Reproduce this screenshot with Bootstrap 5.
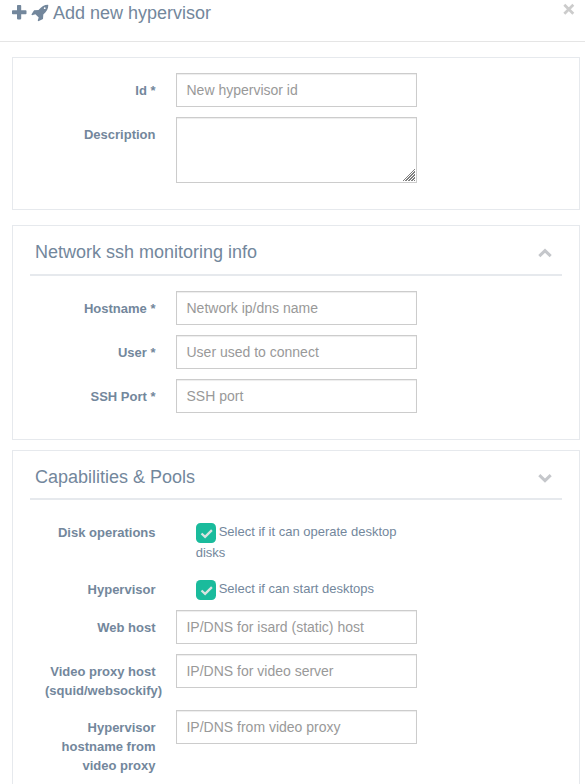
<!DOCTYPE html>
<html lang="en">
<head>
<meta charset="utf-8">
<meta name="viewport" content="width=device-width, initial-scale=1">
<title>Add new hypervisor</title>
<link href="https://cdn.jsdelivr.net/npm/bootstrap@5.3.0/dist/css/bootstrap.min.css" rel="stylesheet">
<style>
body { font-family: "Liberation Sans", Arial, sans-serif; font-size: 13px; line-height: 19px; color: #73879c; height: 784px; overflow: hidden; }
.dialog-head { height: 42px; border-bottom: 1px solid #e5e5e5; padding: 0 10px 0 11px; }
.dialog-title, .panel-title { font-size: 18px; font-weight: 400; line-height: 20px; }
.dialog-title { padding-top: 3px; }
.panel-box { width: 568px; margin-left: 12px; border: 1px solid #e6e9ed; padding: 15px 17px 0; }
.panel-first { margin-top: 15px; height: 153px; }
.panel-net { margin-top: 15px; height: 215px; padding-top: 10px; }
.panel-cap { margin-top: 10px; height: 334px; padding-top: 10px; border-bottom: 0; }
.panel-head { height: 40px; border-bottom: 2px solid #e6e9ed; padding: 6px 10px 0 5px; margin-bottom: 15px; }
.panel-cap .panel-head { height: 39px; }
.field-row { margin-bottom: 10px; }
.field-label { width: 110.5px; margin: 0 20.2px 0 15px; padding-top: 8px; text-align: right; font-weight: 700; }
.form-control.field { width: 241px; height: 34px; padding: 6px 9.8px; font-size: 14px; line-height: 20px; border: 1px solid #ccc; border-radius: 0; box-shadow: inset 0 1px 1px rgba(0,0,0,.075); color: #555; }
.form-control.field::placeholder { color: #999; }
.form-control.field-area { height: 66px; resize: vertical; }
.field-area::-webkit-resizer { background: linear-gradient(135deg, #fff 54%, transparent 54%), repeating-linear-gradient(135deg, #808080 0 1px, #fff 1px 2.120px); border: solid #fff; border-width: 0 1px 1px 0; }
.option { width: 221px; margin-left: 20px; padding-top: 7px; }
.option-two { height: 47px; }
.option-one { height: 28px; }
.tick { width: 20px; height: 20px; margin-right: 3px; vertical-align: middle; }
</style>
<script src="https://cdn.jsdelivr.net/npm/bootstrap@5.3.0/dist/js/bootstrap.bundle.min.js"></script>
</head>
<body class="bg-white">
<header class="dialog-head d-flex justify-content-between align-items-start">
  <h4 class="dialog-title d-flex m-0">
    <svg width="42" height="22" viewBox="0 0 42 22" fill="#73879c" aria-hidden="true">
      <path d="M6.800 2h2.600q.8 0 .8.8v4.500h4.500q.8 0 .8.8v2.300q0 .8-.8.8h-4.500v4.400q0 .8-.8.8h-2.600q-.8 0-.8-.8v-4.400h-4.200q-.8 0-.8-.8v-2.300q0-.8.8-.8h4.200v-4.500q0-.8.8-.8z"/>
      <path fill-rule="evenodd" d="M37 1.700q.3 0 .3.300c0 4-1.500 6.400-5 9.600l-.3 4.400-4.600 2.300-.7-.8 1-2.900-3.300-3.300-3.300 1-.7-.8 2.700-4.300 4.400-.3c3.300-3.400 5.700-5.200 9.500-5.200zM33.700 4.300a.9.900 0 1 0 0 1.800.9.900 0 0 0 0-1.800z"/>
    </svg>
    <span>Add new hypervisor</span>
  </h4>
  <svg width="12" height="18" viewBox="0 0 12 18" stroke="#ccc" stroke-width="2.700" aria-hidden="true"><path d="M1.300 4.700l9 9M10.300 4.700l-9 9"/></svg>
</header>

<section class="panel-box panel-first">
  <div class="field-row d-flex"><label class="field-label" for="hid">Id *</label><input id="hid" class="form-control field" placeholder="New hypervisor id"></div>
  <div class="field-row d-flex"><label class="field-label" for="desc">Description</label><textarea id="desc" class="form-control field field-area"></textarea></div>
</section>

<section class="panel-box panel-net">
  <div class="panel-head d-flex justify-content-between">
    <h2 class="panel-title m-0">Network ssh monitoring info</h2>
    <svg width="14" height="20" viewBox="0 0 14 20" fill="none" stroke="#c5c7cb" stroke-width="3" aria-hidden="true"><path d="M1.300 14.200L7 8.700l5.700 5.500"/></svg>
  </div>
  <div class="field-row d-flex"><label class="field-label" for="host">Hostname *</label><input id="host" class="form-control field" placeholder="Network ip/dns name"></div>
  <div class="field-row d-flex"><label class="field-label" for="user">User *</label><input id="user" class="form-control field" placeholder="User used to connect"></div>
  <div class="field-row d-flex"><label class="field-label" for="port">SSH Port *</label><input id="port" class="form-control field" placeholder="SSH port"></div>
</section>

<section class="panel-box panel-cap overflow-hidden">
  <div class="panel-head d-flex justify-content-between">
    <h2 class="panel-title m-0">Capabilities &amp; Pools</h2>
    <svg width="14" height="20" viewBox="0 0 14 20" fill="none" stroke="#c5c7cb" stroke-width="3" aria-hidden="true"><path d="M1.300 8.200L7 13.700l5.700-5.500"/></svg>
  </div>
  <div class="field-row d-flex"><div class="field-label">Disk operations</div>
    <div class="option option-two"><svg class="tick" viewBox="0 0 20 20" aria-hidden="true"><rect width="20" height="20" rx="4.500" fill="#1abb9c"/><path d="M5.500 10.500l3.600 3.400 6.800-6.800" fill="none" stroke="#d9e4e1" stroke-width="2.300"/></svg>Select if it can operate desktop disks</div></div>
  <div class="field-row d-flex"><div class="field-label">Hypervisor</div>
    <div class="option option-one"><svg class="tick" viewBox="0 0 20 20" aria-hidden="true"><rect width="20" height="20" rx="4.500" fill="#1abb9c"/><path d="M5.500 10.500l3.600 3.400 6.800-6.800" fill="none" stroke="#d9e4e1" stroke-width="2.300"/></svg>Select if can start desktops</div></div>
  <div class="field-row d-flex"><label class="field-label" for="web">Web host</label><input id="web" class="form-control field" placeholder="IP/DNS for isard (static) host"></div>
  <div class="field-row d-flex"><label class="field-label" for="proxy">Video proxy host (squid/websockify)</label><input id="proxy" class="form-control field" placeholder="IP/DNS for video server"></div>
  <div class="field-row d-flex"><label class="field-label" for="hproxy">Hypervisor hostname from video proxy</label><input id="hproxy" class="form-control field" placeholder="IP/DNS from video proxy"></div>
</section>
</body>
</html>
